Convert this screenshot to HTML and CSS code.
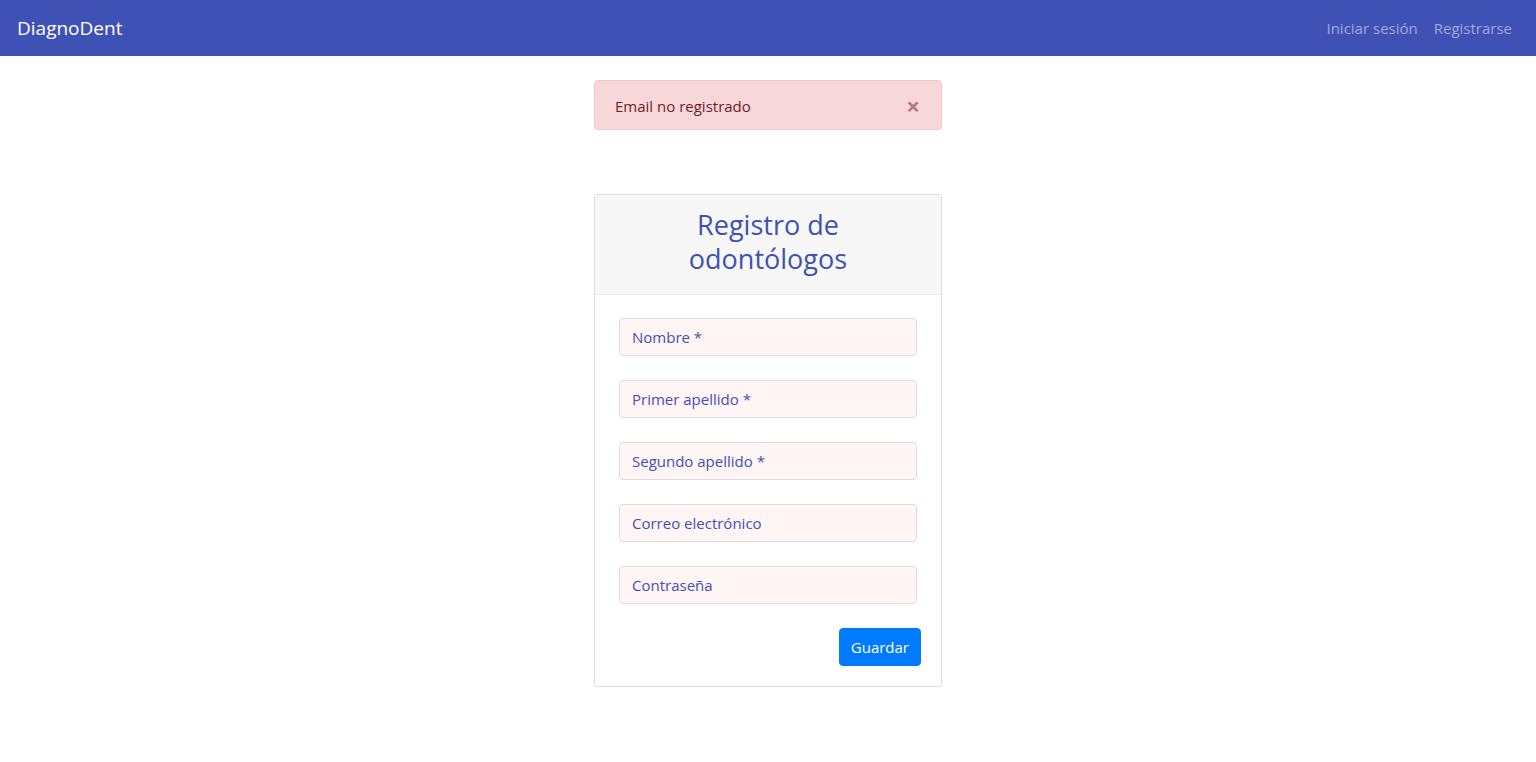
FILE: index.html
```html
<!DOCTYPE html>
<html lang="es">
<head>
<meta charset="utf-8">
<title>DiagnoDent</title>
<link rel="stylesheet" href="styles.css">
</head>
<body>
<nav class="navbar">
  <a class="brand" href="#">DiagnoDent</a>
  <div class="nav-links">
    <a href="#">Iniciar sesión</a>
    <a href="#">Registrarse</a>
  </div>
</nav>
<main class="main">
  <div class="alert">
    <span>Email no registrado</span>
    <button class="close" type="button" aria-label="Cerrar">&times;</button>
  </div>
  <div class="card">
    <div class="card-header">
      <h2>Registro de<br>odontólogos</h2>
    </div>
    <form class="card-body">
      <input class="field" type="text" placeholder="Nombre *">
      <input class="field" type="text" placeholder="Primer apellido *">
      <input class="field" type="text" placeholder="Segundo apellido *">
      <input class="field" type="email" placeholder="Correo electrónico">
      <input class="field" type="password" placeholder="Contraseña">
      <div class="actions">
        <button class="btn" type="button">Guardar</button>
      </div>
    </form>
  </div>
</main>
</body>
</html>
```

FILE: styles.css
```css
* { box-sizing: border-box; }
html, body { margin: 0; padding: 0; }
body {
  font-family: "Open Sans", "Noto Sans", "Liberation Sans", sans-serif;
  font-size: 16px;
  color: #212529;
  background: #fff;
}
.navbar {
  height: 56px;
  background: #3f51b5;
  display: flex;
  align-items: center;
  justify-content: space-between;
  padding: 0 24px 0 17px;
}
.brand {
  color: #fff;
  font-size: 19px;
  text-decoration: none;
}
.nav-links { display: flex; gap: 16px; }
.nav-links a {
  color: rgba(255,255,255,0.5);
  text-decoration: none;
  font-size: 15px;
}
.main {
  display: flex;
  flex-direction: column;
  align-items: center;
  padding-top: 24px;
}
.alert {
  width: 348px;
  height: 50px;
  background: #f8d7da;
  border: 1px solid #f5c6cb;
  border-radius: 4px;
  color: #721c24;
  display: flex;
  align-items: center;
  justify-content: space-between;
  padding: 1px 21px 0 20px;
  font-size: 15px;
}
.close {
  background: none;
  border: none;
  font-size: 24px;
  font-weight: 700;
  color: #721c24;
  opacity: 0.5;
  padding: 0;
  line-height: 1;
  cursor: pointer;
  font-family: inherit;
}
.card {
  width: 348px;
  margin-top: 64px;
  border: 1px solid rgba(0,0,0,0.125);
  border-radius: 4px;
  overflow: hidden;
}
.card-header {
  background: #f7f7f7;
  border-bottom: 1px solid rgba(0,0,0,0.04);
  padding: 13px 20px 18px;
  text-align: center;
}
.card-header h2 {
  margin: 0;
  color: #3f51b5;
  font-weight: 400;
  font-size: 27px;
  line-height: 34px;
}
.card-body {
  padding: 23px 20px 20px 24px;
  display: flex;
  flex-direction: column;
  gap: 24px;
}
.field {
  width: 298px;
  height: 38px;
  border: 1px solid #dcdce0;
  border-radius: 4px;
  background: #fff5f5;
  padding: 0 12px;
  font-family: inherit;
  font-size: 15px;
  color: #3f51b5;
}
.field::placeholder { color: #3f51b5; opacity: 1; }
.actions { display: flex; justify-content: flex-end; }
.btn {
  height: 38px;
  padding: 0 11px;
  background: #007bff;
  border: 1px solid #007bff;
  border-radius: 4px;
  color: #fff;
  font-family: inherit;
  font-size: 15px;
  cursor: pointer;
}
```
